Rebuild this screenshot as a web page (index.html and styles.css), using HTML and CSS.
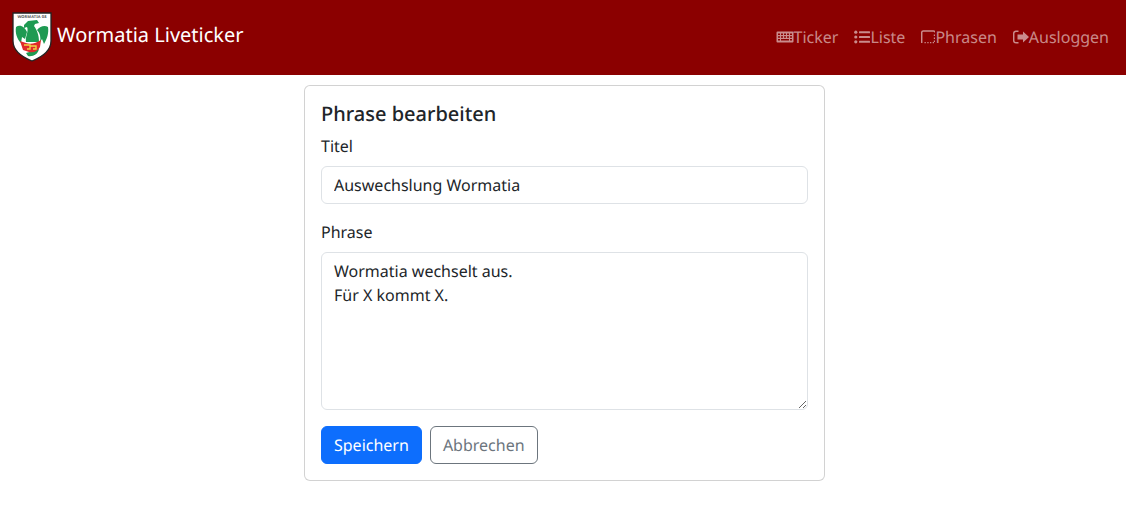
FILE: index.html
```html
<!DOCTYPE html>
<html lang="de">
<head>
<meta charset="utf-8">
<title>Wormatia Liveticker</title>
<link rel="stylesheet" href="styles.css">
</head>
<body>
<nav class="navbar">
  <a class="brand" href="#">
    <svg class="logo" viewBox="0 0 40 50" aria-hidden="true">
      <path d="M1 1H39V29C39 39 30 45 20 49C10 45 1 39 1 29Z" fill="#fff" stroke="#222" stroke-width="1.300"/>
      <text class="logo-text" x="20" y="6.300" text-anchor="middle">WORMATIA 08</text>
      <path d="M4 15C8 12 13 15 15 20L13 27L10 25L9 31C5 27 3 21 4 15Z" fill="#1e9a52"/>
      <path d="M25 18C28 14 33 13 36 15C37 21 35 27 32 32L30 27L28 30C29 25 28 21 25 18Z" fill="#1e9a52"/>
      <path d="M12 13L16 9L25 8L27 11L23 12L22 14C25 18 27 23 27 30L14 30C13 25 17 19 15 15L12 16Z" fill="#1e9a52"/>
      <path d="M27 37C26 42 21 45 16 44L14 41Z" fill="#1e9a52"/>
      <path d="M8 29L14 31C19 33 24 31 29 28L28 35C26 39 22 41 17 40L11 38Z" fill="#e02a2a"/>
      <path d="M12 33H18V37H15M18 34H24V37H21" fill="none" stroke="#efd545" stroke-width="1.400"/>
    </svg>
    <span class="brand-name">Wormatia Liveticker</span>
  </a>
  <ul class="nav">
    <li><a href="#"><svg class="icon" viewBox="0 0 18 14" aria-hidden="true"><path fill-rule="evenodd" d="M1.500 1.500H16.500A1 1 0 0 1 17.500 2.500V11.500A1 1 0 0 1 16.500 12.500H1.500A1 1 0 0 1 .5 11.500V2.500A1 1 0 0 1 1.500 1.500ZM2 3.500V5H4V3.500ZM5 3.500V5H7V3.500ZM8 3.500V5H10V3.500ZM11 3.500V5H13V3.500ZM14 3.500V5H16V3.500ZM2 6.200V7.700H4V6.200ZM5 6.200V7.700H7V6.200ZM8 6.200V7.700H10V6.200ZM11 6.200V7.700H13V6.200ZM14 6.200V7.700H16V6.200ZM2 9V10.500H4V9ZM5 9V10.500H13V9ZM14 9V10.500H16V9Z"/></svg>Ticker</a></li>
    <li><a href="#"><svg class="icon" viewBox="0 0 16 14" aria-hidden="true"><circle cx="1.800" cy="2.200" r="1.600"/><circle cx="1.800" cy="7" r="1.600"/><circle cx="1.800" cy="11.800" r="1.600"/><rect x="5" y="1.200" width="11" height="2" rx=".5"/><rect x="5" y="6" width="11" height="2" rx=".5"/><rect x="5" y="10.800" width="11" height="2" rx=".5"/></svg>Liste</a></li>
    <li><a href="#"><svg class="icon" viewBox="0 0 14 14" aria-hidden="true"><path d="M.7 13V2.500A1.500 1.500 0 0 1 2.200 1H12.500A1.500 1.500 0 0 1 14 2.500" fill="none" stroke="currentColor" stroke-width="1.500"/><path d="M12.800 4.500h1.200v1.400h-1.200zM12.800 7.500h1.200v1.400h-1.200zM12.800 10.500h1.200v1.400h-1.200zM3.500 12h1.300v1.300H3.500zM6.300 12h1.300v1.300H6.300zM9 12h1.300v1.300H9zM11.700 12h1.300v1.300h-1.300z"/></svg>Phrasen</a></li>
    <li><a href="#"><svg class="icon" viewBox="0 0 16 14" aria-hidden="true"><path d="M5.500 1.200H3A2.300 2.300 0 0 0 .7 3.500V10.500A2.300 2.300 0 0 0 3 12.800H5.500" fill="none" stroke="currentColor" stroke-width="1.500"/><path d="M10 1.500L16 7L10 12.500V9.500H4.500V4.500H10Z"/></svg>Ausloggen</a></li>
  </ul>
</nav>
<main class="page">
  <form class="card">
    <h5 class="card-title">Phrase bearbeiten</h5>
    <div class="field">
      <label class="label" for="titel">Titel</label>
      <input class="control" id="titel" type="text" value="Auswechslung Wormatia">
    </div>
    <div class="field">
      <label class="label" for="phrase">Phrase</label>
      <textarea class="control area" id="phrase">Wormatia wechselt aus.
Für X kommt X.</textarea>
    </div>
    <div class="actions">
      <button class="btn btn-primary" type="button">Speichern</button>
      <button class="btn btn-outline" type="button">Abbrechen</button>
    </div>
  </form>
</main>
</body>
</html>
```
FILE: styles.css
```css
* { box-sizing: border-box; }
html, body { margin: 0; padding: 0; }
body {
  font-family: "Noto Sans", sans-serif;
  font-size: 16px;
  line-height: 1.5;
  color: #212529;
  background: #fff;
  text-rendering: geometricPrecision;
}
a { text-decoration: none; }
.navbar {
  display: flex;
  align-items: center;
  justify-content: space-between;
  height: 75px;
  padding: 0 17px 0 12px;
  background: #8b0000;
}
.brand {
  display: flex;
  align-items: center;
  gap: 5px;
  margin-top: -1px;
  font-size: 20px;
  color: #fff;
}
.brand-name { margin-top: -4px; }
.logo { width: 40px; height: 50px; flex: none; }
.logo-text { font-size: 4px; font-weight: 700; letter-spacing: .1px; fill: #555; }
.nav {
  display: flex;
  gap: 16px;
  list-style: none;
  margin: -1px 0 0;
  padding: 0;
}
.nav a {
  display: flex;
  align-items: center;
  color: rgba(255, 255, 255, .55);
}
.icon { height: 14px; width: auto; fill: currentColor; display: block; }
.page { display: flex; justify-content: center; padding: 10px 0 0 3px; }
.card {
  width: 521px;
  padding: 16px;
  border: 1px solid rgba(0, 0, 0, .176);
  border-radius: 6px;
  background: #fff;
}
.card-title {
  margin: 0 0 8px;
  font-size: 20px;
  font-weight: 500;
  line-height: 1.2;
}
.field { margin-bottom: 16px; }
.label { display: block; margin-bottom: 8px; }
.control {
  display: block;
  width: 100%;
  height: 38px;
  padding: 6px 12px;
  font: inherit;
  color: #212529;
  background: #fff;
  border: 1px solid #dee2e6;
  border-radius: 6px;
  text-rendering: geometricPrecision;
}
.area { height: 158px; resize: vertical; }
.actions { display: flex; gap: 8px; }
.btn {
  height: 38px;
  padding: 6px 12px;
  font: inherit;
  border-radius: 6px;
  border: 1px solid transparent;
  background: transparent;
  text-rendering: geometricPrecision;
}
.btn-primary { color: #fff; background: #0d6efd; border-color: #0d6efd; }
.btn-outline { color: #6c757d; border-color: #6c757d; }
```
